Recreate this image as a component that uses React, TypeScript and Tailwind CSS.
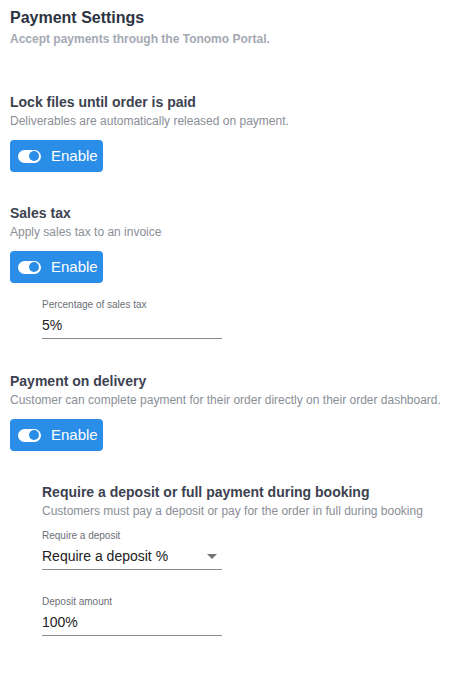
import React from "react"

function EnableButton() {
  return (
    <button className="flex items-center gap-[10px] h-8 w-[93px] rounded-[4px] bg-[#2a8ee8] pl-2 text-white text-[15px]">
      <span className="flex items-center justify-end w-[23px] h-[13px] rounded-full bg-white pr-[2px]">
        <span className="w-[10px] h-[10px] rounded-full bg-[#2a8ee8]" />
      </span>
      <span>Enable</span>
    </button>
  )
}

function Field({ label, value, select }: { label: string; value: string; select?: boolean }) {
  return (
    <div className="w-[180px]">
      <div className="text-[10px] text-[#6b6f76] leading-3">{label}</div>
      <div className="flex items-center justify-between h-[28px] pt-[2px] border-b border-[#8a8a8a] text-[14px] text-[#222]">
        <span>{value}</span>
        {select && (
          <svg width="10" height="5" viewBox="0 0 10 5" className="mr-[5px]">
            <path d="M0 0 L10 0 L5 5 Z" fill="#757575" />
          </svg>
        )}
      </div>
    </div>
  )
}

function Section({ title, desc, children }: { title: string; desc: string; children?: React.ReactNode }) {
  return (
    <div>
      <h3 className="text-[14px] font-bold text-[#3c4250] leading-5">{title}</h3>
      <p className="text-[12px] text-[#8a8e96] leading-4 mt-[1px]">{desc}</p>
      <div className="mt-[11px]">
        <EnableButton />
      </div>
      {children}
    </div>
  )
}

export default function App() {
  return (
    <div className="min-h-screen bg-white px-[10px] pt-[8px]" style={{ fontFamily: "'Liberation Sans', Arial, sans-serif" }}>
      <h1 className="text-[16px] font-bold text-[#2d3341] leading-5">Payment Settings</h1>
      <p className="text-[12px] font-bold text-[#a4a9b3] leading-4 mt-[3px]">Accept payments through the Tonomo Portal.</p>

      <div className="mt-[45px]">
        <Section title="Lock files until order is paid" desc="Deliverables are automatically released on payment." />
      </div>

      <div className="mt-[31px]">
        <Section title="Sales tax" desc="Apply sales tax to an invoice">
          <div className="pl-8 mt-[16px]">
            <Field label="Percentage of sales tax" value="5%" />
          </div>
        </Section>
      </div>

      <div className="mt-[32px]">
        <Section title="Payment on delivery" desc="Customer can complete payment for their order directly on their order dashboard.">
          <div className="pl-8 mt-[31px]">
            <h3 className="text-[14px] font-bold text-[#3c4250] leading-5">Require a deposit or full payment during booking</h3>
            <p className="text-[12px] text-[#8a8e96] leading-4 mt-[1px]">Customers must pay a deposit or pay for the order in full during booking</p>
            <div className="mt-[11px]">
              <Field label="Require a deposit" value="Require a deposit %" select />
            </div>
            <div className="mt-[26px]">
              <Field label="Deposit amount" value="100%" />
            </div>
          </div>
        </Section>
      </div>
    </div>
  )
}
